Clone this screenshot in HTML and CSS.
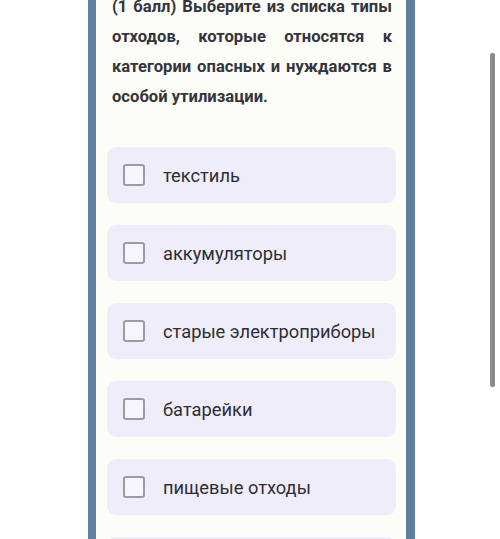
FILE: index.html
```html
<!DOCTYPE html>
<html lang="ru">
<head>
<meta charset="utf-8">
<link rel="stylesheet" href="styles.css">
</head>
<body>
<div class="panel">
  <p class="question">(1 балл) Выберите из списка типы отходов, которые относятся к категории опасных и нуждаются в особой утилизации.</p>
  <div class="options">
    <label class="option"><span class="box"></span><span class="label">текстиль</span></label>
    <label class="option"><span class="box"></span><span class="label">аккумуляторы</span></label>
    <label class="option"><span class="box"></span><span class="label">старые электроприборы</span></label>
    <label class="option"><span class="box"></span><span class="label">батарейки</span></label>
    <label class="option"><span class="box"></span><span class="label">пищевые отходы</span></label>
    <label class="option"><span class="box"></span><span class="label">&nbsp;</span></label>
  </div>
</div>
<div class="scrollbar"></div>
</body>
</html>
```
FILE: styles.css
```css
html, body {
  margin: 0;
  padding: 0;
  background: #ffffff;
  height: 539px;
  overflow: hidden;
}
body {
  font-family: Roboto, "Noto Sans", sans-serif;
  position: relative;
}
.panel {
  margin-left: 88px;
  width: 289px;
  height: 539px;
  overflow: hidden;
  background: #fdfdf7;
  border-left: 8px solid #60809f;
  border-right: 9px solid #60809f;
  padding: 0 10px 0 11px;
}
.question {
  margin: -8px 0 0 0;
  padding: 0 4px 0 5px;
  font-size: 16.6px;
  font-weight: 700;
  line-height: 30px;
  color: #34343c;
  text-align: justify;
}
.options {
  margin-top: 35px;
  display: flex;
  flex-direction: column;
  gap: 22px;
}
.option {
  height: 56px;
  flex: none;
  background: #efedf9;
  border-radius: 9px;
  display: flex;
  align-items: center;
  padding-left: 16px;
  gap: 18px;
}
.box {
  width: 18px;
  height: 18px;
  border: 2px solid #9b9ba4;
  border-radius: 3px;
  background: #f6f5fb;
  flex: none;
}
.label {
  font-size: 18.3px;
  color: #2e2e33;
}
.scrollbar {
  position: absolute;
  left: 490px;
  top: 53px;
  width: 5px;
  height: 334px;
  background: #8a8a8a;
  border-radius: 2px;
}
```
